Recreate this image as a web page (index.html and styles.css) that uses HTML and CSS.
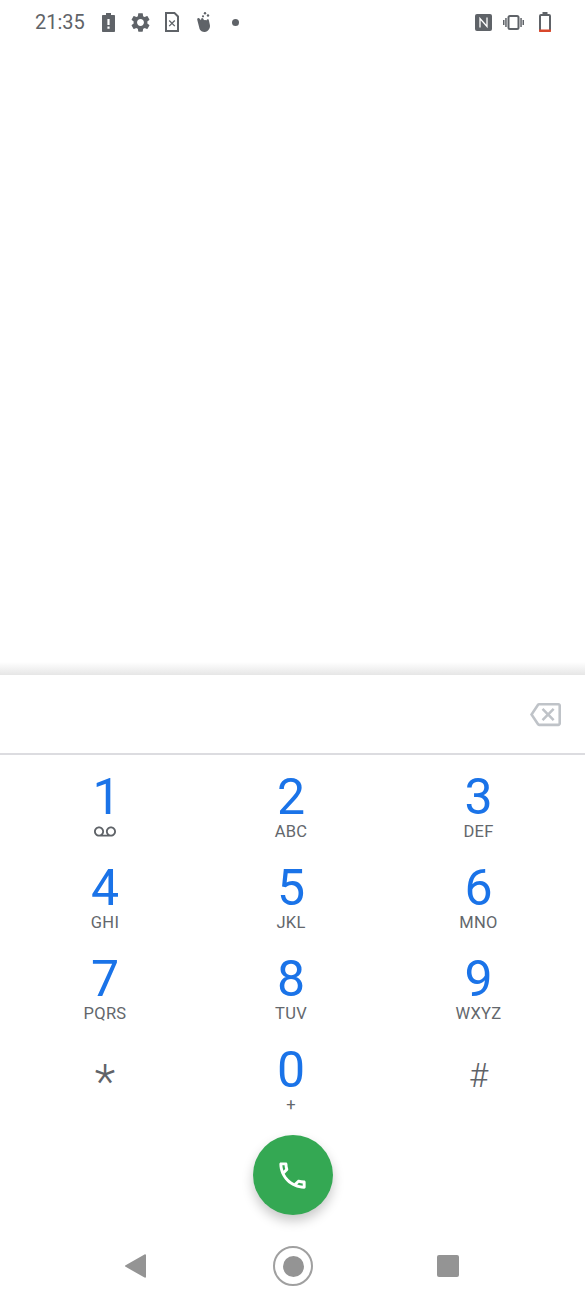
FILE: index.html
```html
<!DOCTYPE html>
<html>
<head>
	<meta charset="utf-8">
	<title>Phone</title>
	<link rel="stylesheet" href="styles.css">
</head>
<body>
<div class="status">
	<span class="time">21:35</span>
	<svg class="ic-alert" viewBox="0 0 13 19"><path fill-rule="evenodd" d="M4 0h5v2h3c.6 0 1 .4 1 1v15c0 .6-.4 1-1 1H1c-.6 0-1-.4-1-1V3c0-.6.4-1 1-1h3zM5.400 6v6h2.200V6zM5.400 13.500v2.200h2.200v-2.200z"/></svg>
	<svg class="ic-gear" viewBox="0 0 24 24"><path d="M19.140 12.940c.040-.300.060-.610.060-.940 0-.320-.020-.640-.070-.940l2.030-1.580c.180-.140.230-.410.120-.610l-1.920-3.320c-.120-.220-.370-.290-.590-.220l-2.390.960c-.500-.380-1.030-.700-1.620-.940l-.360-2.540c-.040-.240-.240-.410-.480-.410h-3.840c-.240 0-.430.170-.470.410l-.360 2.540c-.590.240-1.130.570-1.620.940l-2.390-.960c-.220-.080-.470 0-.590.220L2.740 8.870c-.120.210-.080.470.120.610l2.030 1.580c-.050.300-.090.630-.090.940s.020.640.070.940l-2.030 1.580c-.180.140-.230.410-.120.610l1.920 3.320c.120.220.370.290.590.220l2.390-.960c.500.380 1.030.700 1.620.940l.360 2.540c.050.240.240.410.480.410h3.840c.240 0 .440-.170.470-.410l.360-2.540c.590-.240 1.130-.560 1.620-.940l2.390.960c.220.080.470 0 .590-.220l1.920-3.320c.120-.220.070-.470-.120-.610l-2.010-1.580zM12 15.600c-1.980 0-3.600-1.620-3.600-3.600s1.620-3.600 3.600-3.600 3.600 1.620 3.600 3.600-1.620 3.600-3.600 3.600z"/></svg>
	<svg class="ic-sim" viewBox="0 0 14 20"><path class="line" d="M1 1h8.500L13 4.500V19H1z"/><path class="thin" d="M4.200 8.500l5.600 5.600M9.800 8.500l-5.600 5.600"/></svg>
	<svg class="ic-hand" viewBox="0 0 14 20"><circle cx="8" cy="1.300" r="1.200"/><circle cx="11" cy="3.500" r="1.200"/><circle cx="6" cy="4.300" r="1.100"/><path d="M.5 6.500C1 5.800 2 5.900 2.500 6.500L4 8.200l.2-1.500c.1-.9 1.400-1.100 1.900-.2l1 1.700c.7-.3 1.500-.2 2 .3l1-.9c.7-.6 1.800-.2 1.800.8l1 4.600c.6 3.300-1.800 6.700-5.100 6.900-2.300.1-4.300-1-5.200-3L.3 8c-.2-.6-.1-1.100.2-1.500z"/></svg>
	<span class="dot"></span>
	<span class="grow"></span>
	<svg class="ic-nfc" viewBox="0 0 17 17"><rect width="17" height="17" rx="2"/><path d="M5 13.500V4.500L12 12.500V3.500" fill="none" stroke="#fff" stroke-width="1.300"/></svg>
	<svg class="ic-vib" viewBox="0 0 21 15"><rect class="line" x="5.500" y="1" width="10" height="13" rx="1.500"/><path d="M0 5h1.500v5H0zM2.200 3H3.700v9H2.200zM19.500 5H21v5h-1.500zM17.300 3h1.500v9h-1.500z"/></svg>
	<svg class="ic-batt" viewBox="0 0 12 20"><path d="M3.500 0h5v2h-5z"/><rect class="line" x="1" y="3" width="10" height="16" rx="1"/><path fill="#d9472b" d="M0 17.500h12V19c0 .6-.4 1-1 1H1c-.6 0-1-.4-1-1z"/></svg>
</div>
<div class="blank"></div>
<div class="shade"></div>
<div class="field">
	<svg class="backspace" viewBox="0 0 24 24"><path d="M22 3H7c-.690 0-1.230.350-1.590.880L0 12l5.410 8.110c.360.530.900.890 1.590.890h15c1.100 0 2-.900 2-2V5c0-1.100-.900-2-2-2zm0 16H7.070L2.400 12l4.660-7H22v14zm-11.590-2L14 13.410 17.590 17 19 15.590 15.410 12 19 8.410 17.590 7 14 10.590 10.410 7 9 8.410 12.590 12 9 15.590z"/></svg>
</div>
<div class="keypad">
	<div class="key"><div class="digit one">1</div><svg class="vm" viewBox="0 0 24 24"><path d="M18.500 6C15.460 6 13 8.460 13 11.500c0 1.330.470 2.550 1.260 3.500H9.740c.790-.950 1.260-2.170 1.260-3.500C11 8.460 8.540 6 5.500 6S0 8.460 0 11.500 2.460 17 5.500 17h13c3.040 0 5.500-2.460 5.500-5.500S21.540 6 18.500 6zm-13 9C3.570 15 2 13.430 2 11.500S3.570 8 5.500 8 9 9.570 9 11.500 7.430 15 5.500 15zm13 0c-1.930 0-3.500-1.570-3.500-3.500S16.570 8 18.500 8 22 9.570 22 11.500 20.430 15 18.500 15z"/></svg></div>
	<div class="key"><div class="digit">2</div><div class="letters">ABC</div></div>
	<div class="key"><div class="digit">3</div><div class="letters">DEF</div></div>
	<div class="key"><div class="digit">4</div><div class="letters">GHI</div></div>
	<div class="key"><div class="digit">5</div><div class="letters">JKL</div></div>
	<div class="key"><div class="digit">6</div><div class="letters">MNO</div></div>
	<div class="key"><div class="digit">7</div><div class="letters">PQRS</div></div>
	<div class="key"><div class="digit">8</div><div class="letters">TUV</div></div>
	<div class="key"><div class="digit">9</div><div class="letters">WXYZ</div></div>
	<div class="key"><div class="digit sym star">*</div></div>
	<div class="key"><div class="digit">0</div><div class="letters">+</div></div>
	<div class="key"><div class="digit sym hash">#</div></div>
</div>
<div class="call">
	<div class="fab">
		<svg viewBox="0 0 24 24"><path d="M6.540 5c.060.890.210 1.760.450 2.590l-1.200 1.200c-.410-1.200-.670-2.470-.760-3.790h1.510m9.860 12.020c.850.240 1.720.390 2.600.450v1.490c-1.320-.090-2.590-.350-3.800-.750l1.200-1.190M7.500 3H4c-.550 0-1 .450-1 1 0 9.390 7.610 17 17 17 .550 0 1-.450 1-1v-3.490c0-.550-.450-1-1-1-1.240 0-2.450-.200-3.570-.570-.100-.040-.210-.050-.310-.050-.260 0-.510.100-.710.290l-2.200 2.200c-2.830-1.450-5.150-3.760-6.590-6.590l2.200-2.200c.280-.280.360-.670.250-1.020C8.700 6.450 8.500 5.250 8.500 4c0-.550-.450-1-1-1z"/></svg>
	</div>
</div>
<div class="nav">
	<svg class="back" viewBox="0 0 21 24"><path d="M19.500 .5c.8-.4 1.500 0 1.500.8v21.400c0 .8-.7 1.200-1.500.8L.6 12.800c-.8-.4-.8-1.200 0-1.600z"/></svg>
	<div class="home"><div class="home-dot"></div></div>
	<div class="recent"></div>
</div>
</body>
</html>
```
FILE: styles.css
```css
body {
margin: 0;
width: 585px;
height: 1300px;
overflow: hidden;
background: #fff;
font-family: Roboto, "Liberation Sans", sans-serif;
}
.status {
display: flex;
align-items: center;
height: 44px;
padding: 0 34px 0 35px;
box-sizing: border-box;
color: #5f6368;
}
.status svg {
fill: #5f6368;
flex: none;
}
.line {
fill: none !important;
stroke: #5f6368;
stroke-width: 2;
}
.thin {
fill: none;
stroke: #5f6368;
stroke-width: 1.3;
}
.time {
font-size: 20px;
width: 50px;
}
.ic-alert {
width: 13px;
height: 19px;
margin-left: 17px;
}
.ic-gear {
width: 23px;
height: 23px;
margin-left: 14px;
}
.ic-sim {
width: 14px;
height: 20px;
margin-left: 13px;
}
.ic-hand {
width: 14px;
height: 20px;
margin-left: 18px;
}
.dot {
width: 7px;
height: 7px;
border-radius: 50%;
background: #5f6368;
margin-left: 21px;
}
.grow {
flex: 1;
}
.ic-nfc {
width: 17px;
height: 17px;
}
.ic-vib {
width: 21px;
height: 15px;
margin-left: 11px;
}
.ic-batt {
width: 12px;
height: 20px;
margin-left: 15px;
}
.blank {
height: 618px;
}
.shade {
height: 13px;
background: linear-gradient(#fff, #e6e6e6);
}
.field {
display: flex;
align-items: center;
justify-content: flex-end;
height: 78px;
padding-right: 24px;
border-bottom: 2px solid #dcdce0;
}
.backspace {
width: 31px;
height: 31px;
fill: #bfc3c8;
}
.keypad {
display: grid;
grid-template-columns: 210px 162px 213px;
grid-auto-rows: 91px;
}
.key {
display: flex;
flex-direction: column;
align-items: center;
padding-top: 20px;
box-sizing: border-box;
}
.digit {
font-size: 50px;
line-height: 44px;
color: #1a73e8;
}
.one {
padding-left: 3px;
}
.letters {
font-size: 16.5px;
line-height: 20px;
letter-spacing: 0.3px;
margin-top: 3px;
color: #63676c;
}
.vm {
width: 22px;
height: 22px;
margin-top: 2px;
fill: #5f6368;
}
.sym {
color: #5f6368;
font-weight: 300;
}
.star {
font-size: 48px;
line-height: 60px;
margin-top: 4px;
}
.hash {
font-size: 33px;
line-height: 44px;
margin-top: 6px;
}
.call {
display: flex;
justify-content: center;
padding-top: 16px;
}
.fab {
display: flex;
align-items: center;
justify-content: center;
width: 80px;
height: 80px;
border-radius: 50%;
background: #34a853;
box-shadow: 0 6px 12px rgba(0, 0, 0, 0.22);
}
.fab svg {
width: 35px;
height: 35px;
fill: #fff;
}
.nav {
display: flex;
align-items: center;
height: 62px;
padding-left: 125px;
margin-top: 20px;
}
.back {
width: 21px;
height: 24px;
fill: #949494;
}
.home {
display: flex;
align-items: center;
justify-content: center;
width: 40px;
height: 40px;
box-sizing: border-box;
border: 2px solid #a0a0a0;
border-radius: 50%;
margin-left: 127px;
}
.home-dot {
width: 21px;
height: 21px;
border-radius: 50%;
background: #949494;
}
.recent {
width: 22px;
height: 22px;
border-radius: 2px;
background: #949494;
margin-left: 124px;
}
```
